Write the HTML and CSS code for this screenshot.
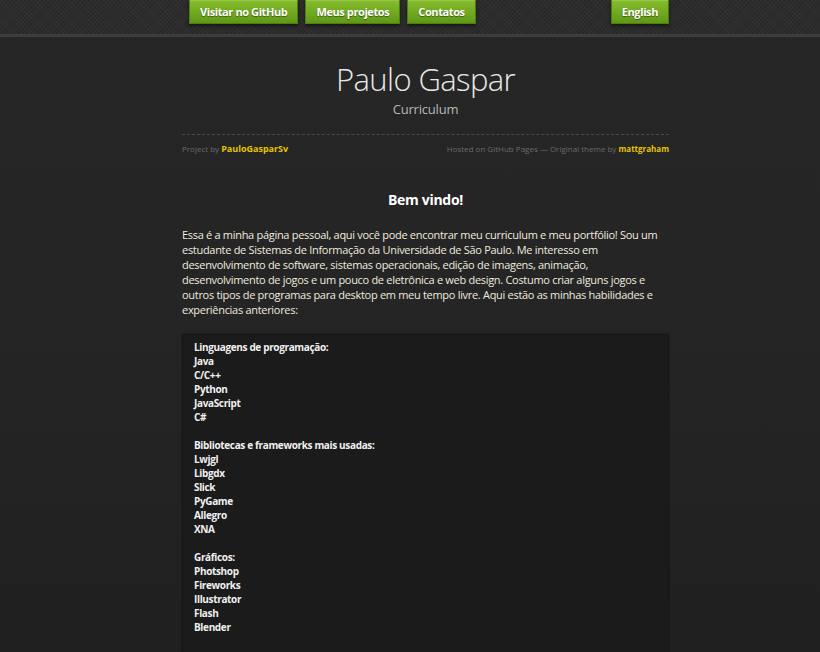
FILE: index.html
```html
<!DOCTYPE html>
<html lang="pt">
<head>
<meta charset="utf-8">
<title>Paulo Gaspar</title>
<link rel="stylesheet" href="styles.css">
</head>
<body>
<div class="topbar">
  <div class="wrap nav">
    <div class="nav-left">
      <a class="btn" href="#">Visitar no GitHub</a>
      <a class="btn" href="#">Meus projetos</a>
      <a class="btn" href="#">Contatos</a>
    </div>
    <a class="btn" href="#">English</a>
  </div>
</div>
<div class="wrap">
  <header class="head">
    <h1>Paulo Gaspar</h1>
    <h2>Curriculum</h2>
  </header>
  <div class="meta">
    <span>Project by <a class="owner" href="#">PauloGasparSv</a></span>
    <span>Hosted on GitHub Pages — Original theme by <a class="author" href="#">mattgraham</a></span>
  </div>
  <h3 class="welcome">Bem vindo!</h3>
  <p class="intro">Essa é a minha página pessoal, aqui você pode encontrar meu curriculum e meu portfólio! Sou um estudante de Sistemas de Informação da Universidade de São Paulo. Me interesso em desenvolvimento de software, sistemas operacionais, edição de imagens, animação, desenvolvimento de jogos e um pouco de eletrônica e web design. Costumo criar alguns jogos e outros tipos de programas para desktop em meu tempo livre. Aqui estão as minhas habilidades e experiências anteriores:</p>
  <pre class="skills">Linguagens de programação:
Java
C/C++
Python
JavaScript
C#

Bibliotecas e frameworks mais usadas:
Lwjgl
Libgdx
Slick
PyGame
Allegro
XNA

Gráficos:
Photshop
Fireworks
Illustrator
Flash
Blender

</pre>
</div>
</body>
</html>
```
FILE: styles.css
```css
html, body {
  margin: 0;
  padding: 0;
}
body {
  background: linear-gradient(#262626 0, #252525 300px, #202020 652px);
  color: #f0ebdf;
  font-family: "Open Sans", "Noto Sans", sans-serif;
  font-size: 11px;
  letter-spacing: -0.3px;
  line-height: 15px;
  min-height: 652px;
  overflow: hidden;
}
.topbar {
  height: 34px;
  background-color: #2c2c2c;
  background-image: repeating-linear-gradient(45deg, rgba(255,255,255,0.025) 0 1px, transparent 1px 3px),
    repeating-linear-gradient(-45deg, rgba(0,0,0,0.12) 0 1px, transparent 1px 3px);
  border-bottom: 3px solid #3d3d3d;
}
.wrap {
  width: 487px;
  margin-left: 182px;
}
.nav {
  display: flex;
  justify-content: space-between;
  padding: 0 0 0 7px;
  box-sizing: border-box;
}
.nav-left {
  display: flex;
  gap: 7px;
}
.btn {
  display: block;
  height: 24px;
  line-height: 23px;
  padding: 0 10px;
  box-sizing: border-box;
  background: linear-gradient(#86bd2c, #5f9816);
  border: 1px solid #4d7d10;
  border-top: none;
  box-shadow: 0 2px 3px rgba(0,0,0,0.5), inset 0 1px 0 rgba(255,255,255,0.15);
  color: #fff;
  font-weight: bold;
  font-size: 11px;
  letter-spacing: -0.4px;
  text-decoration: none;
  text-shadow: 0 1px 1px rgba(0,0,0,0.45);
}
.head {
  text-align: center;
  padding-top: 22px;
  padding-bottom: 15px;
  border-bottom: 1px dashed #4a4a4a;
}
.head h1 {
  margin: 0;
  font-size: 31px;
  letter-spacing: -0.6px;
  font-weight: 300;
  line-height: 40px;
  color: #e8e8e8;
}
.head h2 {
  margin: 0;
  font-size: 13px;
  letter-spacing: -0.2px;
  font-weight: normal;
  line-height: 20px;
  color: #b8b8b8;
}
.meta {
  display: flex;
  justify-content: space-between;
  font-size: 8px;
  letter-spacing: 0;
  color: #6b6b6b;
  padding-top: 7px;
  line-height: 14px;
}
.meta a {
  color: #e8c400;
  font-weight: bold;
  text-decoration: none;
}
.meta .owner {
  font-size: 9px;
  letter-spacing: 0;
}
.meta .author {
  font-size: 8px;
}
.welcome {
  text-align: center;
  font-size: 14px;
  letter-spacing: -0.3px;
  font-weight: bold;
  color: #fff;
  margin: 34px 0 0;
  line-height: 20px;
}
.intro {
  margin: 17px 0 17px;
}
.skills {
  margin: 0;
  background: #1b1b1b;
  border: 1px solid #171717;
  box-shadow: 0 0 2px rgba(0,0,0,0.4);
  padding: 5px 11px;
  font-family: "Open Sans", "Noto Sans", sans-serif;
  font-weight: bold;
  font-size: 10px;
  letter-spacing: -0.35px;
  line-height: 14px;
  color: #f0f0f0;
  min-height: 330px;
}
```
